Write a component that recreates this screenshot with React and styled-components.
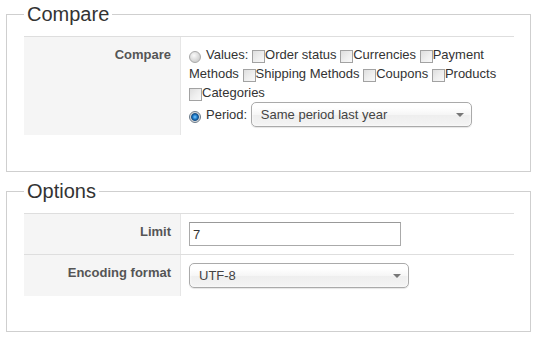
import React from "react";
import styled, { createGlobalStyle } from "styled-components";

const Global = createGlobalStyle`
  html, body {
    margin: 0;
    padding: 0;
    background: #fff;
  }
  body {
    font-family: "Liberation Sans", Arial, sans-serif;
    font-size: 13px;
    color: #333;
  }
`;

const Page = styled.div`
  padding-top: 3px;
`;

const Fieldset = styled.fieldset`
  margin: ${(p) => (p.$first ? "0" : "8px")} 11px 0 6px;
  padding: 10px 16px ${(p) => (p.$first ? "36px" : "35px")} 17px;
  border: 1px solid #cfcfcf;
  min-width: 0;
`;

const Legend = styled.legend`
  padding: 0 3px;
  font-size: 20px;
  line-height: 23px;
  color: #333;
  font-family: "Liberation Sans", Arial, sans-serif;
`;

const Table = styled.div`
  display: flex;
  flex-direction: column;
`;

const Row = styled.div`
  display: grid;
  grid-template-columns: 157px 1fr;
  border-top: 1px solid #dedede;
`;

const Label = styled.div`
  box-sizing: border-box;
  background: #f5f5f5;
  border-right: 1px solid #e6e6e6;
  padding: 8px 9px 8px 8px;
  text-align: right;
  font-weight: bold;
  color: #555;
  line-height: 19px;
`;

const Value = styled.div`
  padding: 8px 8px 8px 8px;
  line-height: 19px;
  color: #333;
`;

const Line = styled.div`
  line-height: 19px;
`;

const Word = styled.span``;

const Radio = styled.span`
  display: inline-block;
  box-sizing: border-box;
  width: 12px;
  height: 12px;
  margin-right: 5px;
  border-radius: 50%;
  border: 1px solid ${(p) => (p.$checked ? "#6b7a88" : "#a8a8a8")};
  vertical-align: -4px;
  background: ${(p) =>
    p.$checked
      ? "radial-gradient(circle at 50% 50%, #7ccaff 0, #2a8ad8 1.8px, #0c4a86 3.4px, #d6d6d6 4.4px, #f4f4f4 6px)"
      : "radial-gradient(circle at 40% 35%, #fafafa 0, #e6e6e6 3px, #d2d2d2 6px)"};
`;

const Check = styled.span`
  display: inline-block;
  box-sizing: border-box;
  width: 13px;
  height: 13px;
  border: 1px solid #a2a2a2;
  background: linear-gradient(135deg, #dedede 0%, #efefef 55%, #f9f9f9 100%);
  vertical-align: -4px;
`;

const SelectBox = styled.div`
  display: inline-flex;
  align-items: center;
  position: relative;
  box-sizing: border-box;
  width: ${(p) => p.$width}px;
  height: 25px;
  padding: 0 0 0 9px;
  border: 1px solid #aaa;
  border-radius: 5px;
  background: linear-gradient(#ffffff 20%, #f6f6f6 50%, #eeeeee 52%, #f4f4f4 100%);
  box-shadow: 0 0 3px #fff inset, 0 1px 1px rgba(0, 0, 0, 0.1);
  color: #444;
  font-size: 13px;
  line-height: 23px;
  vertical-align: baseline;
  cursor: default;
`;

const Arrow = styled.span`
  position: absolute;
  right: 7px;
  top: 50%;
  margin-top: -2px;
  width: 0;
  height: 0;
  border-left: 4px solid transparent;
  border-right: 4px solid transparent;
  border-top: 4px solid #777;
`;

const TextInput = styled.input`
  box-sizing: border-box;
  width: 212px;
  height: 24px;
  margin: 0;
  padding: 0 3px;
  border: 1px solid #aaa;
  border-top-color: #999;
  font-family: "Liberation Sans", Arial, sans-serif;
  font-size: 13px;
  color: #333;
  background: #fff;
  outline: none;
  display: block;
`;

function Select({ value, width }) {
  return (
    <SelectBox $width={width} role="combobox">
      {value}
      <Arrow />
    </SelectBox>
  );
}

const options = [
  "Order status",
  "Currencies",
  "Payment Methods",
  "Shipping Methods",
  "Coupons",
  "Products",
  "Categories",
];

function OptionLabel({ text }) {
  const words = text.split(" ");
  if (words.length === 2 && text.startsWith("Payment")) {
    return (
      <>
        <Word>{words[0]}</Word> <Word>{words[1]}</Word>
      </>
    );
  }
  return <Word>{text}</Word>;
}

export default function App() {
  return (
    <>
      <Global />
      <Page>
        <Fieldset $first>
          <Legend>Compare</Legend>
          <Table>
            <Row>
              <Label>Compare</Label>
              <Value>
                <Line>
                  <Radio />
                  <Word>Values:</Word>{" "}
                  {options.map((o, i) => (
                    <React.Fragment key={o}>
                      <Check />
                      <OptionLabel text={o} />
                      {i < options.length - 1 ? " " : ""}
                    </React.Fragment>
                  ))}
                </Line>
                <Line>
                  <Radio $checked />
                  <Word>Period:</Word>{" "}
                  <Select value="Same period last year" width={221} />
                </Line>
              </Value>
            </Row>
          </Table>
        </Fieldset>
        <Fieldset>
          <Legend>Options</Legend>
          <Table>
            <Row>
              <Label>Limit</Label>
              <Value>
                <TextInput defaultValue="7" />
              </Value>
            </Row>
            <Row>
              <Label>Encoding format</Label>
              <Value>
                <Select value="UTF-8" width={220} />
              </Value>
            </Row>
          </Table>
        </Fieldset>
      </Page>
    </>
  );
}
